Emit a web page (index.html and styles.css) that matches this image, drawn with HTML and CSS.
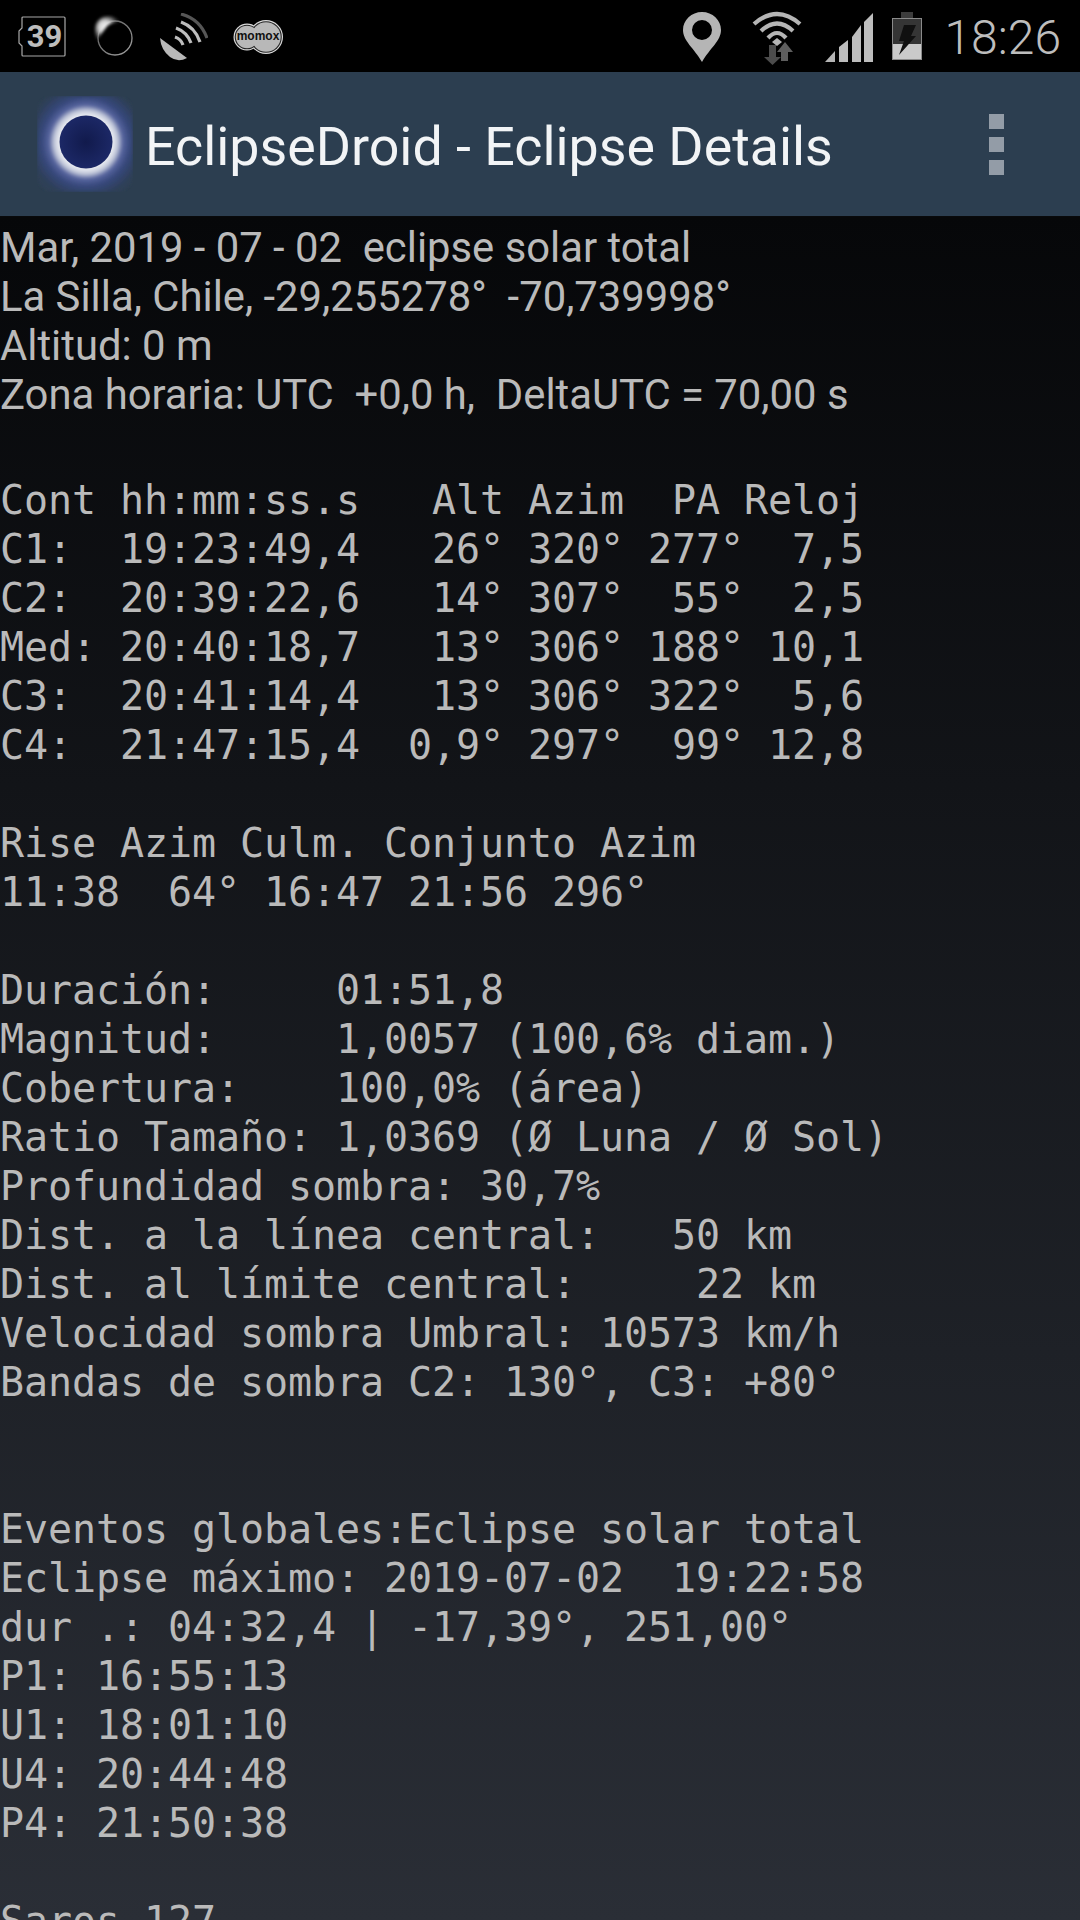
FILE: index.html
```html
<!DOCTYPE html>
<html lang="es">
<head>
<meta charset="utf-8">
<title>EclipseDroid - Eclipse Details</title>
<link rel="stylesheet" href="styles.css">
</head>
<body>
<div class="statusbar">
  <div class="status-left">
    <div class="badge-39">
      <svg class="badge-frame" viewBox="0 0 48 42" width="48" height="42"><path d="M5 1H46a1 1 0 0 1 1 1V39a1 1 0 0 1-1 1H5a1 1 0 0 1-1-1V30L1 27V15L4 12V2a1 1 0 0 1 1-1Z" fill="none" stroke="#a8a8a8" stroke-width="1.2"/></svg>
      <span class="badge-num">39</span>
    </div>
    <svg class="ic-moon" viewBox="0 0 42 42" width="42" height="42">
      <defs>
        <radialGradient id="flare" cx="0.42" cy="0.45" r="0.58"><stop offset="0" stop-color="#f4f4f4"/><stop offset="0.45" stop-color="#d4d4d4"/><stop offset="1" stop-color="#777" stop-opacity="0.2"/></radialGradient>
        <linearGradient id="ring" x1="0" y1="0" x2="1" y2="1"><stop offset="0" stop-color="#555"/><stop offset="1" stop-color="#a4a4a4"/></linearGradient>
        <filter id="moonblur" x="-30%" y="-30%" width="160%" height="160%"><feGaussianBlur stdDeviation="1.500"/></filter>
      </defs>
      <circle cx="23" cy="24" r="17" fill="#000" stroke="url(#ring)" stroke-width="1.300"/>
      <path d="M5 27Q-1 8 11 3 22 0 28 8 17 8 13 15 8 21 5 27Z" fill="url(#flare)" filter="url(#moonblur)"/>
    </svg>
    <svg class="ic-dish" viewBox="0 0 48 48" width="48" height="48">
      <path d="M0 25 27 45Q18 50 10 44 1 37 0 25Z" fill="#b8b8b8"/>
      <path d="M15 24Q21 26 23 32" fill="none" stroke="#bdbdbd" stroke-width="3.200"/>
      <path d="M16 15Q27 19 31 30" fill="none" stroke="#bdbdbd" stroke-width="3.200"/>
      <path d="M21 9Q35 14 40 29" fill="none" stroke="#bdbdbd" stroke-width="3.200"/>
      <path d="M21 1Q40 6 47 25" fill="none" stroke="#565656" stroke-width="3.200"/>
    </svg>
    <div class="momox">
      <svg class="momox-shape" viewBox="0 0 50 34" width="50" height="34">
        <circle cx="14" cy="17" r="13.500" fill="#dcdcdc"/>
        <circle cx="33" cy="17" r="17" fill="#dcdcdc"/>
        <circle cx="14" cy="17" r="12.300" fill="#222"/>
        <circle cx="33" cy="17" r="15.800" fill="#222"/>
        <circle cx="14" cy="17" r="11.200" fill="#b8b8b8"/>
        <circle cx="33" cy="17" r="14.700" fill="#b8b8b8"/>
      </svg>
      <span class="momox-text">momox</span>
    </div>
  </div>
  <div class="status-right">
    <svg class="ic-pin" viewBox="0 0 38 50" width="38" height="50"><path fill-rule="evenodd" d="M19 0C8.500 0 0 8 0 18 0 29 11 36 19 50 27 36 38 29 38 18 38 8 29.500 0 19 0ZM19 8a10 10 0 1 1 0 20 10 10 0 0 1 0-20Z" fill="#b5b5b5"/></svg>
    <svg class="ic-wifi" viewBox="0 0 50 54" width="50" height="54">
      <path d="M2 13Q25-7 48 13" fill="none" stroke="#b5b5b5" stroke-width="4.200"/>
      <path d="M9 20Q25 5 41 20" fill="none" stroke="#b5b5b5" stroke-width="4.200"/>
      <path d="M16 27Q25 17 34 27" fill="none" stroke="#b5b5b5" stroke-width="4.200"/>
      <path d="M20 31 25 27 30 31 25 35Z" fill="#b5b5b5"/>
      <path d="M17 34H24V46H29L20.500 54 12 46H17Z" fill="#4c4c4c"/>
      <path d="M33 31 41 41H36V50H29V41H25Z" fill="#5e5e5e"/>
    </svg>
    <svg class="ic-signal" viewBox="0 0 48 49" width="48" height="49">
      <path d="M0 49 10 38V49Z" fill="#b5b5b5"/>
      <path d="M14 34 23 27V49H14Z" fill="#bdbdbd"/>
      <path d="M27 24 36 12V49H27Z" fill="#bdbdbd"/>
      <path d="M39 9 48 0V49H39Z" fill="#bdbdbd"/>
    </svg>
    <svg class="ic-battery" viewBox="0 0 30 48" width="30" height="48">
      <rect x="9" y="0" width="12" height="6" fill="#3c3c3c"/>
      <rect x="0" y="6" width="30" height="26" fill="#353535"/>
      <rect x="0" y="32" width="30" height="16" fill="#cacaca"/>
      <rect x=".5" y="6.500" width="29" height="41" fill="none" stroke="#8a8a8a" stroke-width="1"/>
      <path d="M12 13H24L19 24H24L7 43 12 29H7Z" fill="#101010"/>
    </svg>
    <span class="clock">18:26</span>
  </div>
</div>
<header class="actionbar">
  <svg class="app-icon" viewBox="0 0 96 96" width="96" height="96">
    <defs>
      <radialGradient id="corona" cx="0.51" cy="0.48" r="0.62">
        <stop offset="0.44" stop-color="#eceef3"/>
        <stop offset="0.53" stop-color="#c2c8da"/>
        <stop offset="0.62" stop-color="#56649e"/>
        <stop offset="0.75" stop-color="#36477a"/>
        <stop offset="0.95" stop-color="#2d3f57"/>
      </radialGradient>
      <radialGradient id="disk" cx="0.5" cy="0.5" r="0.5">
        <stop offset="0" stop-color="#111a4c"/>
        <stop offset="1" stop-color="#1c2866"/>
      </radialGradient>
      <filter id="soft"><feGaussianBlur stdDeviation="1.800"/></filter>
    </defs>
    <rect width="96" height="96" rx="18" fill="url(#corona)" filter="url(#soft)"/>
    <circle cx="49" cy="46" r="26.500" fill="url(#disk)"/>
  </svg>
  <h1 class="title">EclipseDroid - Eclipse Details</h1>
  <div class="menu"><i></i><i></i><i></i></div>
</header>
<main class="content">
<div class="prop">Mar, 2019 - 07 - 02  eclipse solar total
La Silla, Chile, -29,255278°  -70,739998°
Altitud: 0 m
Zona horaria: UTC  +0,0 h,  DeltaUTC = 70,00 s</div>
<pre class="mono">Cont hh:mm:ss.s   Alt Azim  PA Reloj
C1:  19:23:49,4   26° 320° 277°  7,5
C2:  20:39:22,6   14° 307°  55°  2,5
Med: 20:40:18,7   13° 306° 188° 10,1
C3:  20:41:14,4   13° 306° 322°  5,6
C4:  21:47:15,4  0,9° 297°  99° 12,8

Rise Azim Culm. Conjunto Azim
11:38  64° 16:47 21:56 296°

Duración:     01:51,8
Magnitud:     1,0057 (100,6% diam.)
Cobertura:    100,0% (área)
Ratio Tamaño: 1,0369 (Ø Luna / Ø Sol)
Profundidad sombra: 30,7%
Dist. a la línea central:   50 km
Dist. al límite central:     22 km
Velocidad sombra Umbral: 10573 km/h
Bandas de sombra C2: 130°, C3: +80°


Eventos globales:Eclipse solar total
Eclipse máximo: 2019-07-02  19:22:58
dur .: 04:32,4 | -17,39°, 251,00°
P1: 16:55:13
U1: 18:01:10
U4: 20:44:48
P4: 21:50:38

Saros 127</pre>
</main>
</body>
</html>
```
FILE: styles.css
```css
* { box-sizing: border-box; }
html, body { margin: 0; padding: 0; }
body {
  width: 1080px;
  height: 1920px;
  overflow: hidden;
  background: #000;
  display: flex;
  flex-direction: column;
  font-family: Roboto, sans-serif;
}
.statusbar {
  height: 72px;
  flex: none;
  background: #000;
  display: flex;
  justify-content: space-between;
  align-items: center;
}
.status-left { display: flex; align-items: center; padding-left: 18px; }
.status-right { display: flex; align-items: center; padding-right: 19px; }
.badge-39 { position: relative; width: 48px; height: 42px; margin-top: 2px; }
.badge-frame { display: block; }
.badge-num {
  position: absolute;
  left: 5px;
  right: 0;
  top: 0;
  text-align: center;
  font: 700 31px/42px Roboto, sans-serif;
  color: #bdbdbd;
}
.ic-moon { margin-left: 26px; margin-top: -2px; }
.ic-dish { margin-left: 26px; margin-top: 1px; }
.momox { position: relative; width: 50px; height: 34px; margin-left: 25px; margin-top: 2px; }
.momox-shape { display: block; }
.momox-text {
  position: absolute;
  inset: 0;
  text-align: center;
  font: 700 12px/33px "Liberation Sans", sans-serif;
  color: #111;
}
.ic-pin { margin-top: 2px; }
.ic-wifi { margin-left: 31px; margin-top: 4px; }
.ic-signal { margin-left: 23px; margin-top: 2px; }
.ic-battery { margin-left: 19px; margin-top: 0; }
.clock {
  margin-left: 22px;
  padding-top: 4px;
  font: 300 48px/72px Roboto, sans-serif;
  color: #bdbdbd;
}
.actionbar {
  height: 145px;
  flex: none;
  background: #2c3e50;
  border-bottom: 1px solid #08090b;
  display: flex;
  align-items: center;
  padding-left: 37px;
}
.app-icon { flex: none; }
.title {
  margin: 0 0 0 12px;
  padding-top: 5px;
  font: 400 53.750px/1 Roboto, sans-serif;
  color: #f2f4f6;
  flex: 1;
}
.menu { display: flex; flex-direction: column; gap: 8px; margin-right: 76px; }
.menu i { display: block; width: 15px; height: 15px; background: #939ca7; }
.content {
  flex: 1;
  overflow: hidden;
  background: linear-gradient(180deg, #060709 0%, #2a2e36 100%);
  color: #bababa;
  font-size: 41.800px;
  line-height: 49px;
  padding-top: 6px;
}
.prop {
  font-family: Roboto, sans-serif;
  white-space: pre-wrap;
  padding-bottom: 57px;
}
.mono {
  margin: 0;
  font-family: "DejaVu Sans Mono", monospace;
  font-size: 40px;
  letter-spacing: -0.08px;
  line-height: 49px;
}
```
